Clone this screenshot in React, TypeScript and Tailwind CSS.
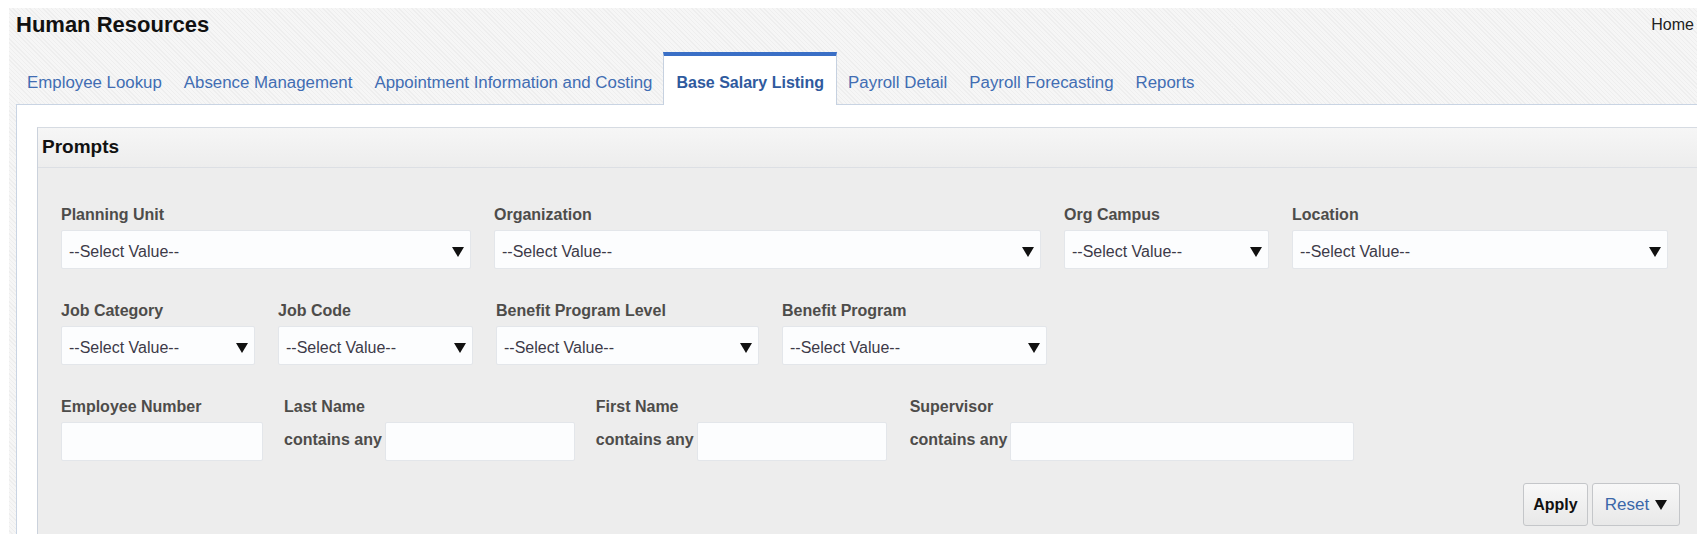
import React from "react";

const Arrow = () => (
  <svg width="12" height="10" viewBox="0 0 12 10" className="shrink-0">
    <polygon points="0,0 12,0 6,10" fill="#111" />
  </svg>
);

const Select = ({ w }: { w: string }) => (
  <div
    className={`${w} h-[39px] mt-[5px] bg-[#fcfdfe] border border-[#e3e6ea] rounded-[2px] flex items-center justify-between pl-[7px] pr-[6px] pt-[4px]`}
  >
    <span className="text-[16px] leading-[20px] text-[#3c3a48]">--Select Value--</span>
    <Arrow />
  </div>
);

const Label = ({ children }: { children: React.ReactNode }) => (
  <div className="text-[16px] leading-[20px] font-bold text-[#4d4c4a] whitespace-nowrap">{children}</div>
);

const Field = ({ label, w }: { label: string; w: string }) => (
  <div className="flex flex-col">
    <Label>{label}</Label>
    <Select w={w} />
  </div>
);

const Input = ({ w }: { w: string }) => (
  <div className={`${w} h-[39px] bg-[#fcfdfe] border border-[#e3e6ea] rounded-[2px]`} />
);

const ContainsField = ({ label, w, className }: { label: string; w: string; className: string }) => (
  <div className={`flex flex-col ${className}`}>
    <Label>{label}</Label>
    <div className="flex items-start mt-[5px] gap-[3px]">
      <div className="mt-[8px] text-[16px] leading-[20px] font-bold text-[#4d4c4a] whitespace-nowrap">
        contains any
      </div>
      <Input w={w} />
    </div>
  </div>
);

const tabs = [
  "Employee Lookup",
  "Absence Management",
  "Appointment Information and Costing",
  "Base Salary Listing",
  "Payroll Detail",
  "Payroll Forecasting",
  "Reports",
];

export default function App() {
  return (
    <div className="w-[1705px] h-[534px] bg-white overflow-hidden font-['Liberation_Sans',Arial,sans-serif]">
      <div className="ml-[9px] mt-[8px] w-[1688px] h-[526px] overflow-hidden flex flex-col bg-[repeating-linear-gradient(45deg,#f6f6f6_0px,#f6f6f6_2px,#eeeeee_2px,#eeeeee_3px)]">
        {/* Header */}
        <div className="h-[44px] shrink-0 flex justify-between items-start pl-[7px] pr-[3px] pt-[4px]">
          <div className="text-[22px] leading-[26px] font-bold text-[#111]">Human Resources</div>
          <div className="text-[16px] leading-[26px] text-[#222]">Home</div>
        </div>

        {/* Tabs */}
        <div className="h-[52px] shrink-0 flex items-end pl-[7px] relative z-10">
          {tabs.map((t) =>
            t === "Base Salary Listing" ? (
              <div
                key={t}
                className="h-[53px] -mb-px bg-white border-t-4 border-t-[#3a6fc6] border-x border-x-[#c6d1e0] px-[12px] pt-[17px] text-[16px] leading-[20px] font-bold text-[#2f5a9e] whitespace-nowrap"
              >
                {t}
              </div>
            ) : (
              <div
                key={t}
                className="h-[52px] border-t-4 border-t-transparent px-[11px] pt-[17px] text-[16.85px] leading-[20px] text-[#416db3] whitespace-nowrap"
              >
                {t}
              </div>
            )
          )}
        </div>

        {/* Content */}
        <div className="ml-[7px] flex-1 bg-white border-l border-t border-[#c9d4e3] pl-[20px] pt-[22px] flex flex-col">
          <div className="flex-1 border-t border-l border-t-[#d6dbe2] border-l-[#cbd2dc] flex flex-col">
            <div className="h-[40px] shrink-0 flex items-center pl-[4px] bg-gradient-to-b from-[#f6f6f6] to-[#ededed] border-b border-[#dcdfe4] text-[19px] font-bold text-[#111]">
              Prompts
            </div>
            <div className="flex-1 bg-[#ededed] pl-[23px] pt-[37px] flex flex-col">
              <div className="flex flex-col gap-[32px]">
                <div className="flex gap-[23px]">
                  <Field label="Planning Unit" w="w-[410px]" />
                  <Field label="Organization" w="w-[547px]" />
                  <Field label="Org Campus" w="w-[205px]" />
                  <Field label="Location" w="w-[376px]" />
                </div>
                <div className="flex gap-[23px]">
                  <Field label="Job Category" w="w-[194px]" />
                  <Field label="Job Code" w="w-[195px]" />
                  <Field label="Benefit Program Level" w="w-[263px]" />
                  <Field label="Benefit Program" w="w-[265px]" />
                </div>
                <div className="flex">
                  <div className="flex flex-col">
                    <Label>Employee Number</Label>
                    <div className="mt-[5px]">
                      <Input w="w-[202px]" />
                    </div>
                  </div>
                  <ContainsField label="Last Name" w="w-[190px]" className="ml-[21px]" />
                  <ContainsField label="First Name" w="w-[190px]" className="ml-[21px]" />
                  <ContainsField label="Supervisor" w="w-[344px]" className="ml-[23px]" />
                </div>
              </div>
              <div className="mt-[22px] flex justify-end pr-[17px] gap-[4px]">
                <button className="w-[65px] h-[43px] rounded-[3px] border border-[#c4c6c9] bg-gradient-to-b from-[#f8f8f8] to-[#e8e8e8] text-[16px] font-bold text-[#111]">
                  Apply
                </button>
                <button className="w-[88px] h-[43px] rounded-[3px] border border-[#c4c6c9] bg-gradient-to-b from-[#f8f8f8] to-[#e8e8e8] text-[17px] text-[#3b67a9] flex items-center justify-center gap-[6px]">
                  <span>Reset</span>
                  <Arrow />
                </button>
              </div>
            </div>
          </div>
        </div>
      </div>
    </div>
  );
}
